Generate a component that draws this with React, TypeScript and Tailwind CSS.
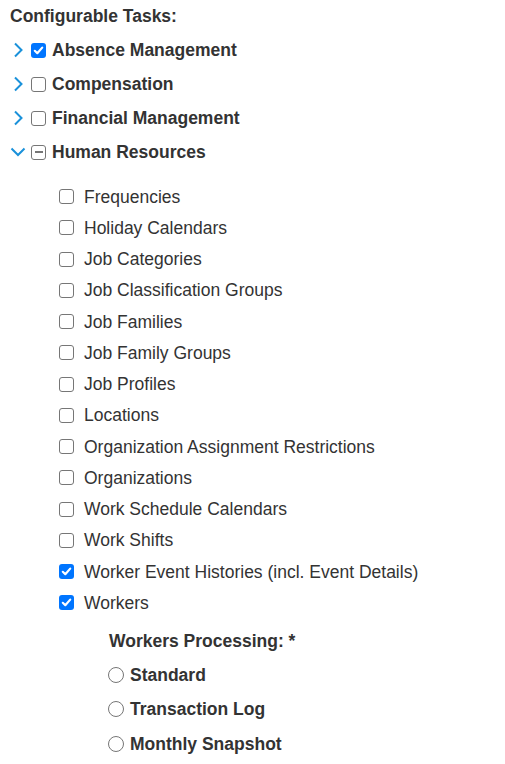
import React from "react";

type Box = "checked" | "unchecked" | "indeterminate";

function CheckBox({ state }: { state: Box }) {
  if (state === "checked") {
    return (
      <span className="flex h-[15px] w-[15px] shrink-0 items-center justify-center rounded-[3px] bg-[#0075ff]">
        <svg width="11" height="11" viewBox="0 0 11 11">
          <path d="M1.8 5.8 L4.3 8.2 L9.2 2.6" fill="none" stroke="#fff" strokeWidth="2.2" strokeLinecap="round" strokeLinejoin="round" />
        </svg>
      </span>
    );
  }
  if (state === "indeterminate") {
    return (
      <span className="flex h-[15px] w-[15px] shrink-0 items-center justify-center rounded-[3px] border border-[#767676] bg-white">
        <span className="block h-[2px] w-[8px] bg-[#767676]" />
      </span>
    );
  }
  return <span className="block h-[15px] w-[15px] shrink-0 rounded-[3px] border border-[#767676] bg-white" />;
}

function Chevron({ open }: { open: boolean }) {
  return (
    <span className="flex w-[16px] shrink-0 items-center justify-center">
      {open ? (
        <svg width="16" height="10" viewBox="0 0 16 10">
          <path d="M1.5 1.5 L8 8 L14.5 1.5" fill="none" stroke="#1a91da" strokeWidth="2" />
        </svg>
      ) : (
        <svg width="10" height="16" viewBox="0 0 10 16">
          <path d="M2 1.5 L8.5 8 L2 14.5" fill="none" stroke="#1a91da" strokeWidth="2" />
        </svg>
      )}
    </span>
  );
}

const top = [
  { label: "Absence Management", state: "checked" as Box },
  { label: "Compensation", state: "unchecked" as Box },
  { label: "Financial Management", state: "unchecked" as Box },
];

const children: { label: string; checked: boolean }[] = [
  { label: "Frequencies", checked: false },
  { label: "Holiday Calendars", checked: false },
  { label: "Job Categories", checked: false },
  { label: "Job Classification Groups", checked: false },
  { label: "Job Families", checked: false },
  { label: "Job Family Groups", checked: false },
  { label: "Job Profiles", checked: false },
  { label: "Locations", checked: false },
  { label: "Organization Assignment Restrictions", checked: false },
  { label: "Organizations", checked: false },
  { label: "Work Schedule Calendars", checked: false },
  { label: "Work Shifts", checked: false },
  { label: "Worker Event Histories (incl. Event Details)", checked: true },
  { label: "Workers", checked: true },
];

const radios = ["Standard", "Transaction Log", "Monthly Snapshot"];

export default function App() {
  return (
    <div className="h-[764px] w-[505px] bg-white font-['Liberation_Sans',Arial,sans-serif] text-[17.5px] text-[#333]">
      <div className="flex h-[33px] items-center pl-[10px] font-bold">Configurable Tasks:</div>
      {top.map((t) => (
        <div key={t.label} className="flex h-[34px] items-center pl-[10px]">
          <Chevron open={false} />
          <span className="ml-[5px]">
            <CheckBox state={t.state} />
          </span>
          <span className="ml-[6px] font-bold">{t.label}</span>
        </div>
      ))}
      <div className="flex h-[34px] items-center pl-[10px]">
        <Chevron open={true} />
        <span className="ml-[5px]">
          <CheckBox state="indeterminate" />
        </span>
        <span className="ml-[6px] font-bold">Human Resources</span>
      </div>
      <div className="mt-[12px]">
        {children.map((c) => (
          <div key={c.label} className="flex h-[31.25px] items-center pl-[59px]">
            <CheckBox state={c.checked ? "checked" : "unchecked"} />
            <span className="ml-[10px]">{c.label}</span>
          </div>
        ))}
      </div>
      <div className="mt-[6px] flex h-[33px] items-center pl-[109px] font-bold">Workers Processing: *</div>
      {radios.map((r) => (
        <div key={r} className="flex h-[34.5px] items-center pl-[108px]">
          <span className="block h-[16px] w-[16px] shrink-0 rounded-full border border-[#767676] bg-white" />
          <span className="ml-[6px] font-bold">{r}</span>
        </div>
      ))}
    </div>
  );
}
